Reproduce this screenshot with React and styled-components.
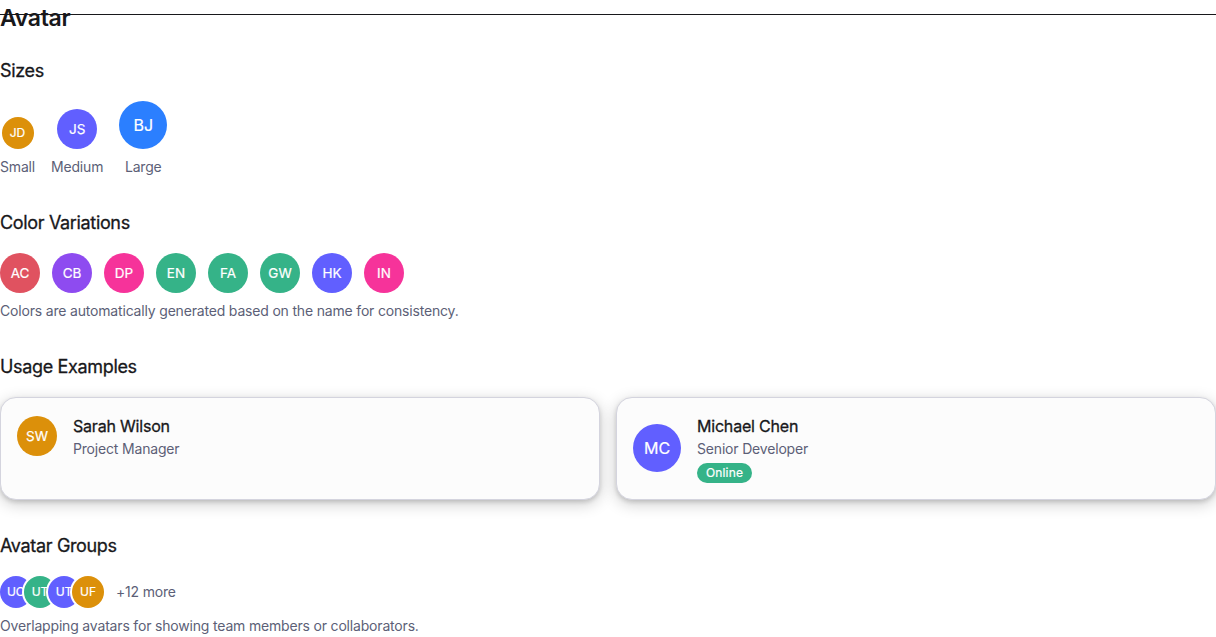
import React from "react";
import styled, { createGlobalStyle } from "styled-components";

const GlobalStyle = createGlobalStyle`
  *, *::before, *::after { box-sizing: border-box; }
  html { background: #fff; overflow: hidden; }
  body {
    margin: 0;
    color: #18181b;
    font-family: Inter, "Liberation Sans", sans-serif;
    font-size: 16px;
    line-height: 24px;
    -webkit-font-smoothing: antialiased;
  }
  h1, h2, p { margin: 0; }
`;

const palette = {
  amber: "#dc900a",
  indigo: "#615fff",
  blue: "#2b7fff",
  red: "#e05260",
  purple: "#8e4bf0",
  pink: "#f6339a",
  green: "#35b388",
};

const avatarSizes = {
  sm: { box: 32, font: 12 },
  md: { box: 40, font: 13.5 },
  lg: { box: 48, font: 16 },
};

const Page = styled.main`
  position: relative;
  display: flex;
  flex-direction: column;
  gap: 32px;
  padding-top: 2px;
`;

const Rule = styled.div`
  position: absolute;
  top: 14px;
  left: 0;
  right: 0;
  height: 1px;
  background: #18181b;
`;

const Title = styled.h1`
  margin-bottom: -9px;
  font-size: 23px;
  line-height: 32px;
  font-weight: 600;
  letter-spacing: -0.35px;
`;

const Section = styled.section`
  display: flex;
  flex-direction: column;
`;

const Heading = styled.h2`
  margin-bottom: 16px;
  font-size: 18px;
  line-height: 28px;
  font-weight: 400;
  letter-spacing: -0.34px;
  -webkit-text-stroke: 0.3px currentColor;
`;

const Row = styled.div`
  display: flex;
  align-items: ${(p) => p.$align || "center"};
  gap: ${(p) => p.$gap}px;
`;

const SizeItem = styled.div`
  display: flex;
  flex-direction: column;
  align-items: center;
  gap: 8px;
`;

const Muted = styled.p`
  margin-top: ${(p) => p.$top || 0}px;
  color: #5c5f77;
  font-size: 14px;
  line-height: 20px;
  letter-spacing: -0.18px;
`;

const Avatar = styled.div`
  display: flex;
  flex: none;
  align-items: center;
  justify-content: center;
  width: ${(p) => avatarSizes[p.$size].box}px;
  height: ${(p) => avatarSizes[p.$size].box}px;
  border-radius: 50%;
  background: ${(p) => palette[p.$color]};
  color: #fff;
  font-size: ${(p) => avatarSizes[p.$size].font}px;
  font-weight: 400;
  -webkit-text-stroke: 0.2px currentColor;
`;

const AvatarStack = styled.div`
  display: flex;

  ${Avatar} {
    box-shadow: 0 0 0 2px #fff;
  }
  ${Avatar} + ${Avatar} {
    margin-left: -8px;
  }
`;

const Cards = styled.div`
  display: grid;
  grid-template-columns: 1fr 1fr;
  gap: 16px;
`;

const Card = styled.article`
  display: flex;
  align-items: ${(p) => p.$align};
  gap: 16px;
  padding: 16px;
  border: 1px solid #d4d4de;
  border-radius: 16px;
  background: #fcfcfc;
  box-shadow: 0 4px 16px rgba(0, 0, 0, 0.2), 0 2px 4px rgba(0, 0, 0, 0.14);

  ${Avatar} {
    margin-bottom: 2px;
  }
`;

const Person = styled.div`
  display: flex;
  flex-direction: column;
  align-items: flex-start;
`;

const Name = styled.div`
  font-weight: 400;
  letter-spacing: -0.2px;
  -webkit-text-stroke: 0.3px currentColor;
`;

const Badge = styled.span`
  margin-top: 4px;
  padding: 2px 9px;
  border-radius: 10px;
  background: ${palette.green};
  color: #fff;
  font-size: 12px;
  line-height: 16px;
  font-weight: 400;
  letter-spacing: 0.15px;
  -webkit-text-stroke: 0.2px currentColor;
`;

const sizes = [
  ["JD", "amber", "sm", "Small"],
  ["JS", "indigo", "md", "Medium"],
  ["BJ", "blue", "lg", "Large"],
];

const variations = [
  ["AC", "red"],
  ["CB", "purple"],
  ["DP", "pink"],
  ["EN", "green"],
  ["FA", "green"],
  ["GW", "green"],
  ["HK", "indigo"],
  ["IN", "pink"],
];

const group = [
  ["UO", "indigo"],
  ["UT", "green"],
  ["UT", "indigo"],
  ["UF", "amber"],
];

export default function App() {
  return (
    <Page>
      <GlobalStyle />
      <Title>Avatar</Title>
      <Section>
        <Heading>Sizes</Heading>
        <Row $gap={16} $align="flex-end">
          {sizes.map(([initials, color, size, label]) => (
            <SizeItem key={label}>
              <Avatar $size={size} $color={color}>{initials}</Avatar>
              <Muted>{label}</Muted>
            </SizeItem>
          ))}
        </Row>
      </Section>
      <Section>
        <Heading>Color Variations</Heading>
        <Row $gap={12}>
          {variations.map(([initials, color]) => (
            <Avatar key={initials} $size="md" $color={color}>{initials}</Avatar>
          ))}
        </Row>
        <Muted $top={8}>Colors are automatically generated based on the name for consistency.</Muted>
      </Section>
      <Section>
        <Heading>Usage Examples</Heading>
        <Cards>
          <Card $align="flex-start">
            <Row $gap={16}>
              <Avatar $size="md" $color="amber">SW</Avatar>
              <Person>
                <Name>Sarah Wilson</Name>
                <Muted $top={1}>Project Manager</Muted>
              </Person>
            </Row>
          </Card>
          <Card $align="center">
            <Avatar $size="lg" $color="indigo">MC</Avatar>
            <Person>
              <Name>Michael Chen</Name>
              <Muted $top={1}>Senior Developer</Muted>
              <Badge>Online</Badge>
            </Person>
          </Card>
        </Cards>
      </Section>
      <Section>
        <Heading>Avatar Groups</Heading>
        <Row $gap={12}>
          <AvatarStack>
            {group.map(([initials, color], i) => (
              <Avatar key={i} $size="sm" $color={color}>{initials}</Avatar>
            ))}
          </AvatarStack>
          <Muted>+12 more</Muted>
        </Row>
        <Muted $top={8}>Overlapping avatars for showing team members or collaborators.</Muted>
      </Section>
      <Rule />
    </Page>
  );
}
